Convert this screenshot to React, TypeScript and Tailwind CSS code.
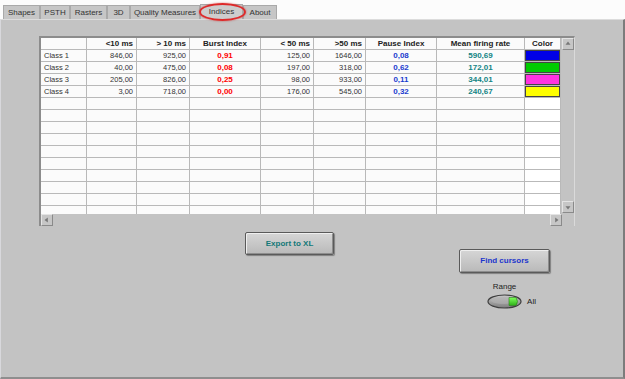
import React from 'react';

type Row = {
  name: string;
  a: string;
  b: string;
  burst: string;
  c: string;
  d: string;
  pause: string;
  rate: string;
  color: string;
};

const rows: Row[] = [
  { name: 'Class 1', a: '846,00', b: '925,00', burst: '0,91', c: '125,00', d: '1646,00', pause: '0,08', rate: '590,69', color: 'bg-[#0000e6]' },
  { name: 'Class 2', a: '40,00', b: '475,00', burst: '0,08', c: '197,00', d: '318,00', pause: '0,62', rate: '172,01', color: 'bg-[#00cc00]' },
  { name: 'Class 3', a: '205,00', b: '826,00', burst: '0,25', c: '98,00', d: '933,00', pause: '0,11', rate: '344,01', color: 'bg-[#ff33e0]' },
  { name: 'Class 4', a: '3,00', b: '718,00', burst: '0,00', c: '176,00', d: '545,00', pause: '0,32', rate: '240,67', color: 'bg-[#ffff00]' },
];

const tabs = [
  ['Shapes', 'w-[37px]'],
  ['PSTH', 'w-[30px]'],
  ['Rasters', 'w-[37px]'],
  ['3D', 'w-[23px]'],
  ['Quality Measures', 'w-[70px]'],
  ['Indices', 'w-[43px]'],
  ['About', 'w-[34px]'],
] as const;

// column template shared by header and body rows
const cols = 'grid grid-cols-[46px_50px_53px_71px_53px_52px_71px_88px_36px]';
const cell = 'h-[12px] border-r border-b border-[#b9b9b9] bg-[#fbfbfb] px-[3px] leading-[11px] truncate';

function Header() {
  const heads = ['', '<10 ms', '> 10 ms', 'Burst Index', '< 50 ms', '>50 ms', 'Pause Index', 'Mean firing rate', 'Color'];
  return (
    <div className={cols}>
      {heads.map((h, i) => (
        <div
          key={i}
          className={`${cell} font-bold text-[8px] text-[#222] ${i === 1 || i === 2 || i === 4 || i === 5 ? 'text-right' : 'text-center'}`}
        >
          {h}
        </div>
      ))}
    </div>
  );
}

function DataRow({ r }: { r: Row }) {
  return (
    <div className={`${cols} text-[7.5px] text-[#333]`}>
      <div className={cell}>{r.name}</div>
      <div className={`${cell} text-right`}>{r.a}</div>
      <div className={`${cell} text-right`}>{r.b}</div>
      <div className={`${cell} text-center font-bold text-[8px] text-[#ff0000]`}>{r.burst}</div>
      <div className={`${cell} text-right`}>{r.c}</div>
      <div className={`${cell} text-right`}>{r.d}</div>
      <div className={`${cell} text-center font-bold text-[8px] text-[#1a3ccf]`}>{r.pause}</div>
      <div className={`${cell} text-center font-bold text-[8px] text-[#138484]`}>{r.rate}</div>
      <div className={`${cell} !px-0 p-0`}>
        <div className={`h-full w-full border border-[#444] ${r.color}`} />
      </div>
    </div>
  );
}

function EmptyRow() {
  return (
    <div className={cols}>
      {Array.from({ length: 9 }).map((_, i) => (
        <div key={i} className={`${cell} ${i === 8 ? 'bg-white' : ''}`} />
      ))}
    </div>
  );
}

function ScrollBtn({ dir }: { dir: 'up' | 'down' | 'left' | 'right' }) {
  const pts = {
    up: '3,7 6,3 9,7',
    down: '3,5 6,9 9,5',
    left: '7,3 3,6 7,9',
    right: '5,3 9,6 5,9',
  }[dir];
  return (
    <div className="w-[12px] h-[12px] bg-[#c6c6c6] border border-t-[#e4e4e4] border-l-[#e4e4e4] border-r-[#8a8a8a] border-b-[#8a8a8a] flex items-center justify-center">
      <svg width="10" height="10" viewBox="0 0 12 12">
        <polygon points={pts} fill="#777" />
      </svg>
    </div>
  );
}

function Button({ label, color, className }: { label: string; color: string; className: string }) {
  return (
    <button
      className={`${className} flex items-center justify-center font-bold text-[8px] rounded-[2px] bg-gradient-to-b from-[#d6d6d6] to-[#b9b9b9] border border-[#5a5a5a] shadow-[inset_1px_1px_0_#efefef,inset_-1px_-1px_0_#8d8d8d,1px_1px_1px_rgba(0,0,0,0.35)] ${color}`}
    >
      {label}
    </button>
  );
}

export default function App() {
  return (
    <div className="w-[625px] h-[379px] bg-[#fcfcfc] flex flex-col font-['Liberation_Sans',Arial,sans-serif] text-[#333] overflow-hidden">
      {/* tab strip */}
      <div className="h-[19px] flex items-end pl-[3px] relative">
        {tabs.map(([t, w]) => (
          <div
            key={t}
            className={`${w} h-[14px] flex items-center justify-center text-[8px] border-t border-l border-r border-[#a9a9a9] ${
              t === 'Indices' ? 'bg-[#cdcdcd] h-[15px]' : 'bg-[#c6c6c6]'
            } text-[#333]`}
          >
            {t}
          </div>
        ))}
        {/* red highlight ring round the Indices tab */}
        <div className="absolute left-[199px] top-[3px] w-[47px] h-[18px] rounded-[50%] border-2 border-[#dd2a2a] shadow-[0_0_2px_rgba(200,0,0,0.6)]" />
      </div>

      {/* panel */}
      <div className="flex-1 bg-[#c3c3c3] border-t border-[#dcdcdc] border-r-2 border-r-[#7c7c7c] border-b-2 border-b-[#8e8e8e] border-l border-l-[#d8d8dc] pt-[16px] pl-[38px]">
        {/* table */}
        <div className="w-[536px] border-t-2 border-l-2 border-[#8c8c8c] border-r border-r-[#dadada] flex flex-col">
          <div className="flex">
            <div className="h-[176px] overflow-hidden">
              <Header />
              {rows.map((r) => (
                <DataRow key={r.name} r={r} />
              ))}
              {Array.from({ length: 11 }).map((_, i) => (
                <EmptyRow key={i} />
              ))}
            </div>
            <div className="w-[13px] h-[176px] flex flex-col justify-between pl-[1px] pb-[1px]">
              <ScrollBtn dir="up" />
              <ScrollBtn dir="down" />
            </div>
          </div>
          <div className="h-[12px] w-[521px] flex justify-between">
            <ScrollBtn dir="left" />
            <ScrollBtn dir="right" />
          </div>
        </div>

        {/* controls */}
        <div className="flex items-start">
          <Button label="Export to XL" color="text-[#137878]" className="ml-[206px] mt-[6px] w-[89px] h-[23px]" />
          <div className="ml-[125px] mt-[23px] flex flex-col items-center">
            <Button label="Find cursors" color="text-[#1c35cc]" className="w-[91px] h-[24px]" />
            <div className="mt-[9px] text-[8px] text-[#222] leading-[10px]">Range</div>
            <div className="flex items-center mt-[2px] ml-[14px]">
              <svg width="35" height="15" viewBox="0 0 35 15">
                <defs>
                  <linearGradient id="tg" x1="0" y1="0" x2="0" y2="1">
                    <stop offset="0" stopColor="#c9c9c9" />
                    <stop offset="1" stopColor="#7e7e7e" />
                  </linearGradient>
                  <linearGradient id="gk" x1="0" y1="0" x2="0" y2="1">
                    <stop offset="0" stopColor="#7dff5a" />
                    <stop offset="1" stopColor="#2fb21a" />
                  </linearGradient>
                </defs>
                <ellipse cx="17.5" cy="7.5" rx="16.5" ry="6.5" fill="url(#tg)" stroke="#3f3f3f" strokeWidth="1.2" />
                <ellipse cx="17" cy="6.5" rx="13" ry="3.5" fill="#b3b3b3" opacity="0.6" />
                <path d="M22 3.5 L29 3.5 Q32 7.5 29 11.5 L22 11.5 Z" fill="url(#gk)" stroke="#2c7d1c" strokeWidth="0.6" />
              </svg>
              <span className="ml-[5px] text-[8px] text-[#222]">All</span>
            </div>
          </div>
        </div>
      </div>
    </div>
  );
}
